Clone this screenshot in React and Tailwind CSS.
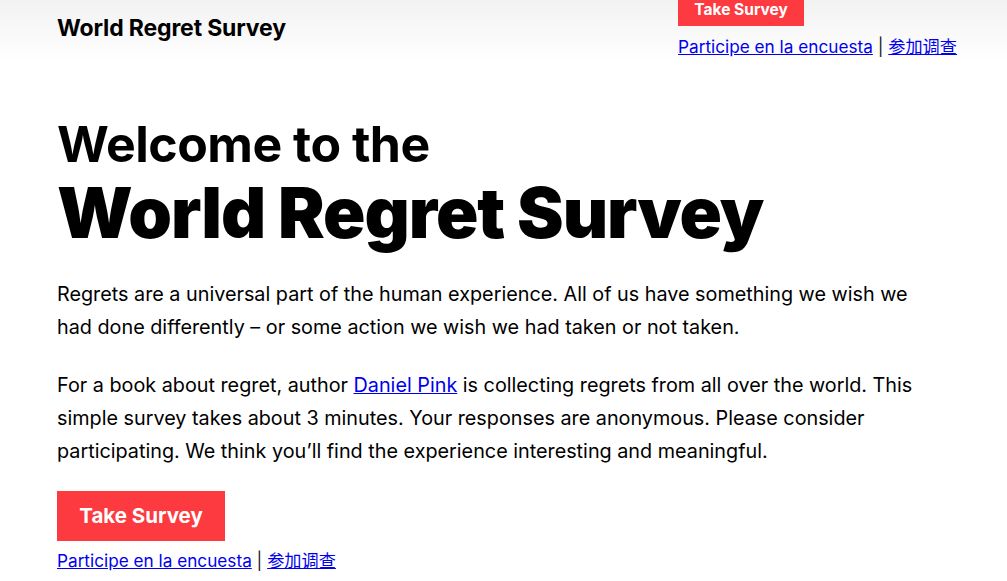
export default function App() {
  const font = { fontFamily: 'Inter, "Noto Sans CJK SC", sans-serif' };
  return (
    <div style={font} className="min-h-[581px] bg-white text-black">
      <header className="flex items-start justify-between bg-gradient-to-b from-[#f2f2f2] to-white pl-[57px] pr-[50px] h-[62px]">
        <div className="pt-[14px] text-[23px] font-bold leading-[28px] tracking-[-0.15px]">World Regret Survey</div>
        <div className="flex flex-col items-start">
          <a className="flex h-[26px] w-[126px] items-start justify-center bg-[#fd3a3f] text-[15.5px] font-bold leading-[20px] text-white">Take Survey</a>
          <div className="mt-[9px] text-[17.2px] leading-[24px]">
            <a href="#" className="text-[#0000ee] underline">Participe en la encuesta</a>
            <span className="text-[#222]"> | </span>
            <a href="#" className="text-[#0000ee] underline">参加调查</a>
          </div>
        </div>
      </header>
      <main className="pl-[57px] pr-[50px]">
        <h1 className="mt-[52px] font-bold">
          <span className="block text-[50px] leading-[60px] tracking-[-0.5px]">Welcome to the</span>
          <span className="block text-[70px] font-black leading-[78px] tracking-[-1.05px]">World Regret Survey</span>
        </h1>
        <p className="mt-[26px] max-w-[870px] text-[19.8px] leading-[33px]">
          Regrets are a universal part of the human experience. All of us have something we wish we had done differently – or some action we wish we had taken or not taken.
        </p>
        <p className="mt-[25px] max-w-[870px] text-[19.8px] leading-[33px]">
          For a book about regret, author <a href="#" className="text-[#0000ee] underline">Daniel Pink</a> is collecting regrets from all over the world. This simple survey takes about 3 minutes. Your responses are anonymous. Please consider participating. We think you’ll find the experience interesting and meaningful.
        </p>
        <a className="mt-[23px] flex h-[50px] w-[168px] items-center justify-center bg-[#fd3a3f] text-[20.5px] font-bold text-white">Take Survey</a>
        <div className="mt-[8px] text-[17.2px] leading-[24px]">
          <a href="#" className="text-[#0000ee] underline">Participe en la encuesta</a>
          <span className="text-[#222]"> | </span>
          <a href="#" className="text-[#0000ee] underline">参加调查</a>
        </div>
      </main>
    </div>
  );
}
